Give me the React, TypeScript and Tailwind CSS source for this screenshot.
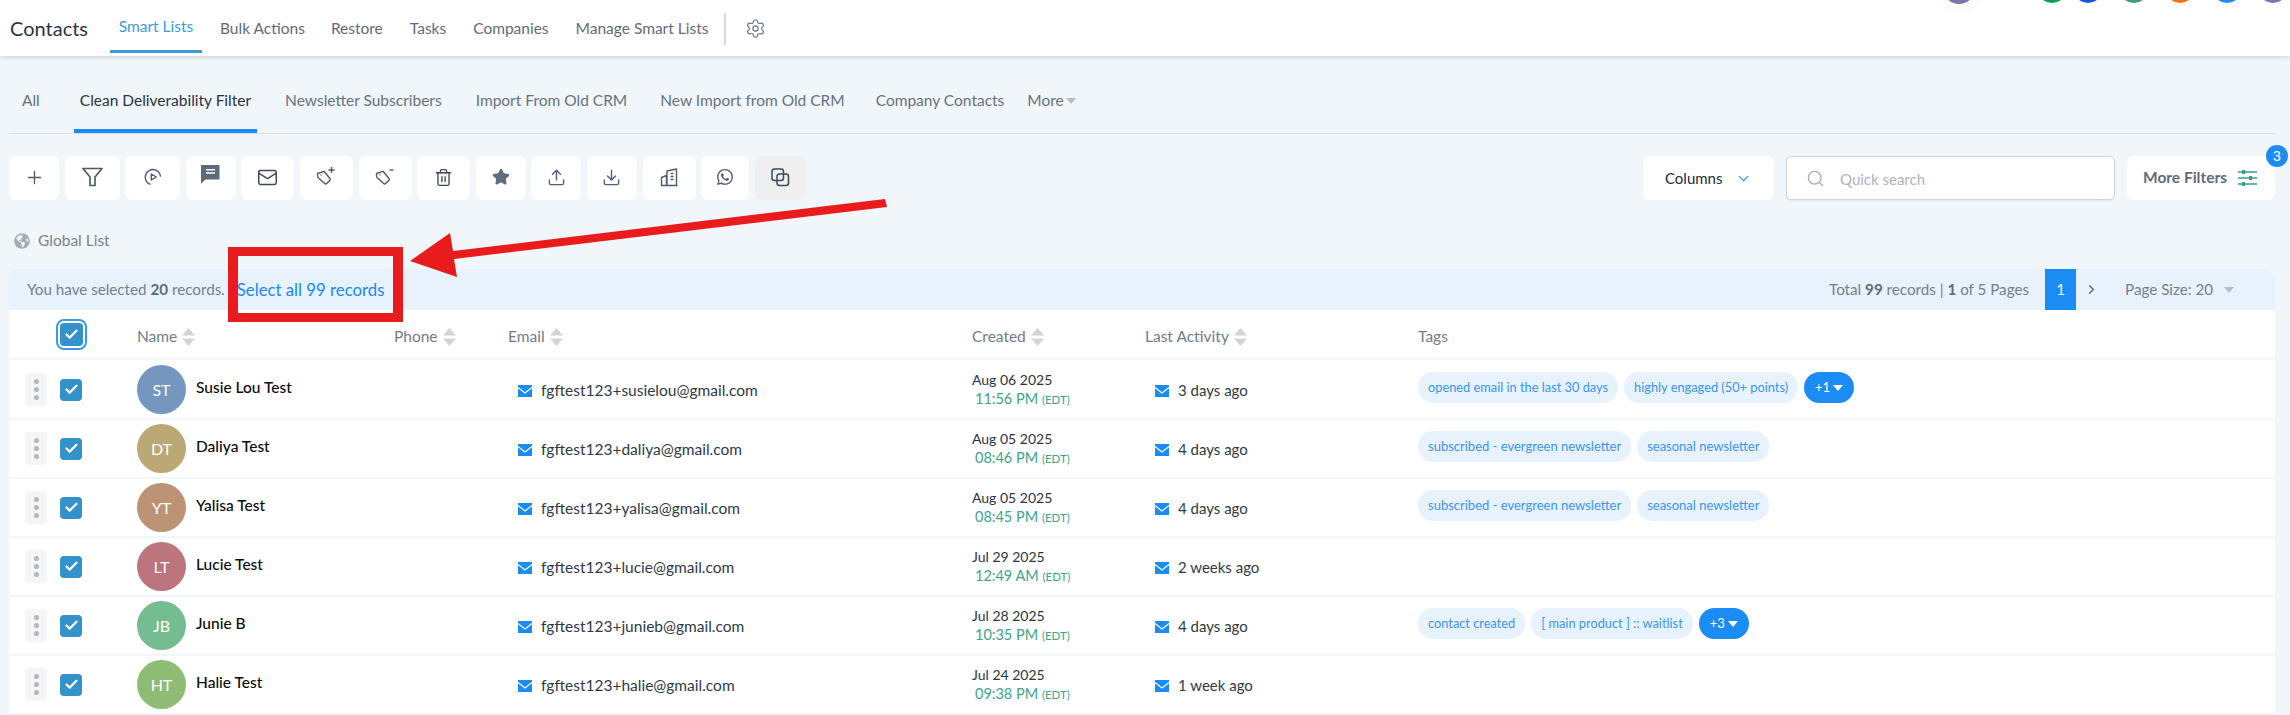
import { Plus, Mail, Trash2, Star, Upload, Download, Settings, Search, Check, ChevronDown, ChevronRight } from "lucide-react";
import { BsWhatsapp } from "react-icons/bs";
import { FaGlobeAmericas } from "react-icons/fa";

const ICON = "#4d5c6b";

function FilterIcon() {
  return (
    <svg width="21" height="20" viewBox="0 0 21 20" fill="none" stroke={ICON} strokeWidth="1.7" strokeLinejoin="round">
      <path d="M1 1.5h19l-7 8.5v8.5h-5V10z" />
    </svg>
  );
}

function PlayIcon() {
  return (
    <svg width="18" height="18" viewBox="0 0 18 18" fill="none" stroke={ICON} strokeWidth="1.4" strokeLinecap="round" strokeLinejoin="round">
      <path d="M6 16.2A7.6 7.6 0 1 1 16.4 8" />
      <path d="M7.3 6v6l5-3z" />
    </svg>
  );
}

function ChatIcon() {
  return (
    <svg width="19" height="19" viewBox="0 0 19 19">
      <path d="M0 0h18.5v14.5H4.5L0 18.5z" fill="#5d6b78" />
      <path d="M5 4.8h9M5 8h9" stroke="#fff" strokeWidth="1.5" />
    </svg>
  );
}

function TagIcon({ sign }: { sign: "plus" | "minus" }) {
  return (
    <svg width="20" height="20" viewBox="0 0 20 20" fill="none" stroke={ICON} strokeWidth="1.4" strokeLinejoin="round">
      <path d="M1.5 6.5l6.5-2.2 6 7.2c.5.7.4 1.4-.2 1.9l-3.2 3.2c-.6.6-1.4.5-1.9-.1L2 10.5c-.5-.6-.6-1.3-.5-4z" />
      <circle cx="5" cy="8" r=".7" fill={ICON} stroke="none" />
      {sign === "plus" ? <path d="M15.5 0v6M12.5 3h6" /> : <path d="M14.5 3h4" />}
    </svg>
  );
}

function BuildingIcon() {
  return (
    <svg width="19" height="19" viewBox="0 0 19 19" fill="none" stroke={ICON} strokeWidth="1.4" strokeLinejoin="round">
      <path d="M1 17.5h16.5M1.5 17.5v-8l5-2v10M7 17.5V3l9.5-2v16.5" />
      <path d="M10.5 5.5h3M10.5 8.5h3M10.5 11.5h3" />
    </svg>
  );
}

function CopyIcon() {
  return (
    <svg width="19" height="19" viewBox="0 0 19 19" fill="none" stroke="#3c4a58" strokeWidth="1.5">
      <rect x="1" y="1" width="11.5" height="11.5" rx="2.5" />
      <rect x="6" y="6" width="11.5" height="11.5" rx="2.5" />
    </svg>
  );
}

function SlidersIcon() {
  return (
    <svg width="19" height="18" viewBox="0 0 19 18" fill="none" stroke="#37a085" strokeWidth="1.6">
      <path d="M0 3h19M0 9h19M0 15h19" />
      <path d="M5.5 1v4M12.5 7v4M5.5 13v4" strokeWidth="3" />
    </svg>
  );
}

function MailBadge() {
  return (
    <svg width="14" height="12" viewBox="0 0 14 12" className="shrink-0">
      <rect width="14" height="12" fill="#1c8cf5" />
      <path d="M0 2.5l7 5.5 7-5.5" fill="none" stroke="#fff" strokeWidth="1.1" />
    </svg>
  );
}

function SortIcon() {
  return (
    <svg width="13" height="18" viewBox="0 0 13 18" className="ml-[5px]" fill="#d3d3d3">
      <path d="M6.5 0L13 7.5H0zM6.5 18L0 10.5h13z" />
    </svg>
  );
}

function Caret({ className }: { className: string }) {
  return <span className={`inline-block h-0 w-0 border-x-[5px] border-t-[6px] border-x-transparent ${className}`} />;
}

const toolbar = [
  { w: "w-[50px]", icon: <Plus size={21} color={ICON} strokeWidth={1.5} /> },
  { w: "w-[55px]", icon: <FilterIcon /> },
  { w: "w-[55px]", icon: <PlayIcon /> },
  { w: "w-[50px]", icon: <ChatIcon />, up: true },
  { w: "w-[53px]", icon: <Mail size={21} color="#3c4a58" strokeWidth={1.7} /> },
  { w: "w-[53px]", icon: <TagIcon sign="plus" /> },
  { w: "w-[53px]", icon: <TagIcon sign="minus" /> },
  { w: "w-[53px]", icon: <Trash2 size={19} color="#3c4a58" strokeWidth={1.7} /> },
  { w: "w-[50px]", icon: <Star size={18} color="#5d6e7e" fill="#5d6e7e" /> },
  { w: "w-[50px]", icon: <Upload size={19} color="#506478" strokeWidth={1.8} /> },
  { w: "w-[50px]", icon: <Download size={19} color="#506478" strokeWidth={1.8} /> },
  { w: "w-[53px]", icon: <BuildingIcon /> },
  { w: "w-[48px]", icon: <BsWhatsapp size={16} color={ICON} /> },
  { w: "w-[51px]", icon: <CopyIcon />, active: true },
];

const rows = [
  { initials: "ST", color: "bg-[#7596bf]", name: "Susie Lou Test", email: "fgftest123+susielou@gmail.com", date: "Aug 06 2025", time: "11:56 PM", activity: "3 days ago", tags: ["opened email in the last 30 days", "highly engaged (50+ points)"], tagSize: "text-[12.8px]", more: "+1" },
  { initials: "DT", color: "bg-[#bca875]", name: "Daliya Test", email: "fgftest123+daliya@gmail.com", date: "Aug 05 2025", time: "08:46 PM", activity: "4 days ago", tags: ["subscribed - evergreen newsletter", "seasonal newsletter"], tagSize: "text-[13px]" },
  { initials: "YT", color: "bg-[#bc9475]", name: "Yalisa Test", email: "fgftest123+yalisa@gmail.com", date: "Aug 05 2025", time: "08:45 PM", activity: "4 days ago", tags: ["subscribed - evergreen newsletter", "seasonal newsletter"], tagSize: "text-[13px]" },
  { initials: "LT", color: "bg-[#bc757c]", name: "Lucie Test", email: "fgftest123+lucie@gmail.com", date: "Jul 29 2025", time: "12:49 AM", activity: "2 weeks ago", tags: [], tagSize: "" },
  { initials: "JB", color: "bg-[#75bc90]", name: "Junie B", email: "fgftest123+junieb@gmail.com", date: "Jul 28 2025", time: "10:35 PM", activity: "4 days ago", tags: ["contact created", "[ main product ] :: waitlist"], tagSize: "text-[12.8px]", more: "+3" },
  { initials: "HT", color: "bg-[#8fbc75]", name: "Halie Test", email: "fgftest123+halie@gmail.com", date: "Jul 24 2025", time: "09:38 PM", activity: "1 week ago", tags: [], tagSize: "" },
];

const columns = "grid grid-cols-[128px_257px_114px_464px_173px_273px_1fr] items-center";

export default function App() {
  return (
    <div className="relative h-[715px] w-[2290px] overflow-hidden bg-[#f1f6fa] font-[Lato,sans-serif]">
      {/* Top nav */}
      <header className="relative flex h-14 items-center bg-white pl-[10px] shadow-[0_1px_5px_rgba(90,100,120,0.25)]">
        <span className="w-[100px] text-[20px] text-[#2a3442]">Contacts</span>
        <nav className="flex h-full items-center pt-[1px] text-[15.5px] text-[#5f6b78]">
          <a className="flex h-[52px] w-[92px] items-center justify-center self-start border-b-[3px] border-[#3b9bdc] pt-[3px] text-[#3b9bdc]">Smart Lists</a>
          <a className="ml-[18px]">Bulk Actions</a>
          <a className="ml-[26px]">Restore</a>
          <a className="ml-[27px]">Tasks</a>
          <a className="ml-[27px]">Companies</a>
          <a className="ml-[27px]">Manage Smart Lists</a>
          <span className="ml-[16px] h-[32px] w-[2px] bg-[#d6d9dd]" />
          <Settings size={21} strokeWidth={1.3} color="#68747f" className="ml-[19px]" />
        </nav>
        <div className="ml-auto -mt-[81px] mr-[2px] flex items-center">
          <span className="size-[32px] rounded-full bg-[#7e73ae] shadow-[0_0_0_10px_rgba(0,0,0,0.012)]" />
          <span className="ml-[62px] size-[30px] rounded-full bg-[#0f9d58]" />
          <span className="ml-[6px] size-[30px] rounded-full bg-[#1a56db]" />
          <span className="ml-[16px] size-[30px] rounded-full bg-[#3c9a83]" />
          <span className="ml-[16px] size-[30px] rounded-full bg-[#f97316]" />
          <span className="ml-[17px] size-[30px] rounded-full bg-[#1c8cf5]" />
          <span className="ml-[16px] size-[30px] rounded-full bg-[#7e73ae]" />
        </div>
      </header>

      <div className="ml-[9px] mr-[15px]">
        {/* Smart list tabs */}
        <div className="flex h-[78px] items-center border-b border-[#d9dfe5] pt-[12px] text-[15.5px] text-[#66727f]">
          <a className="ml-[13px]">All</a>
          <a className="relative ml-[40px] flex h-full items-center text-[#2a3442]">
            Clean Deliverability Filter
            <span className="absolute -inset-x-[6px] bottom-0 h-[4px] bg-[#1c8cf5]" />
          </a>
          <a className="ml-[34px]">Newsletter Subscribers</a>
          <a className="ml-[34px]">Import From Old CRM</a>
          <a className="ml-[33px]">New Import from Old CRM</a>
          <a className="ml-[31px]">Company Contacts</a>
          <a className="ml-[23px] flex items-center">
            More
            <Caret className="ml-[2px] border-t-[#b5bcc3]" />
          </a>
        </div>

        {/* Actions */}
        <div className="mt-[22px] flex h-[44px] items-stretch">
          <div className="flex gap-[5.6px]">
            {toolbar.map((t, i) => (
              <button
                key={i}
                className={`flex items-center justify-center rounded-[7px] ${t.w} ${t.active ? "bg-[#efefef]" : "bg-white"} ${t.up ? "pb-[7px]" : "pb-[2px]"}`}
              >
                {t.icon}
              </button>
            ))}
          </div>
          <div className="ml-auto flex gap-[12px]">
            <button className="flex w-[131px] items-center rounded-[7px] bg-white pl-[22px] text-[15px] text-[#1f2a3a]">
              Columns
              <ChevronDown size={17} color="#1c8cf5" strokeWidth={1.6} className="ml-[13px]" />
            </button>
            <div className="flex w-[329px] items-center rounded-[5px] border border-[#cfd5dd] bg-white pl-[19px] text-[15px] text-[#aeb4bb] shadow-[0_1px_2px_rgba(0,0,0,0.08)]">
              <Search size={19} color="#a9afb6" strokeWidth={1.7} />
              <span className="ml-[15px] pt-[2px]">Quick search</span>
            </div>
            <button className="relative flex w-[148px] items-center rounded-[7px] bg-white pl-[16px] text-[15.5px] font-bold text-[#5f6b78]">
              More Filters
              <span className="ml-[11px]"><SlidersIcon /></span>
              <span className="absolute -right-[13px] -top-[11px] flex size-[22px] items-center justify-center rounded-full bg-[#1c8cf5] font-[Liberation_Sans,sans-serif] text-[14px] font-normal text-white">3</span>
            </button>
          </div>
        </div>

        {/* Global list label */}
        <div className="flex h-[69px] items-center pl-[5px] pt-[13px] text-[15.5px] text-[#78838d]">
          <FaGlobeAmericas size={16} color="#a4adb5" />
          <span className="ml-[8px]">Global List</span>
        </div>

        {/* Selection + pagination */}
        <div className="flex h-[41px] items-center rounded-t-[9px] bg-[#e7f2fd] pl-[18px] text-[15.2px] text-[#74808c]">
          <span>You have selected <b className="text-[#5f6b78]">20</b> records.</span>
          <a className="ml-[12px] text-[16.75px] text-[#2088f0]">Select all 99 records</a>
          <span className="ml-auto">Total <b className="text-[#5f6b78]">99</b> records | <b className="text-[#5f6b78]">1</b> of 5 Pages</span>
          <span className="ml-[16px] flex h-full w-[31px] items-center justify-center bg-[#1c8cf5] text-white">1</span>
          <ChevronRight size={15} color="#5f6b78" strokeWidth={2.4} className="ml-[8px]" />
          <span className="ml-[26px]">Page Size: 20</span>
          <Caret className="ml-[11px] mr-[41px] border-t-[#b5bcc3]" />
        </div>

        {/* Table */}
        <div className="bg-white">
          <div className={`${columns} h-[50px] border-b-2 border-[#f1f6fa] text-[15.5px] text-[#717c87]`}>
            <div className="pl-[47px]">
              <span className="flex size-[31px] items-center justify-center rounded-[8px] border-2 border-[#3b9bdc]">
                <span className="flex size-[23px] items-center justify-center rounded-[4px] bg-[#3292c9]">
                  <Check size={15} color="#fff" strokeWidth={3.5} />
                </span>
              </span>
            </div>
            <div className="mt-[6px] flex items-center">Name<SortIcon /></div>
            <div className="mt-[6px] flex items-center">Phone<SortIcon /></div>
            <div className="mt-[6px] flex items-center">Email<SortIcon /></div>
            <div className="mt-[6px] flex items-center">Created<SortIcon /></div>
            <div className="mt-[6px] flex items-center">Last Activity<SortIcon /></div>
            <div className="mt-[6px]">Tags</div>
          </div>

          {rows.map((r, i) => (
            <div key={r.email} className={`${columns} border-b-2 border-[#f1f6fa] ${i === 0 ? "h-[60px] pt-px" : "h-[59px]"}`}>
              <div className="flex items-center pl-4">
                <span className="flex h-[33px] w-[22px] flex-col items-center justify-center gap-[3px] rounded-[4px] bg-[#f5f5f5]">
                  <span className="size-[5px] rounded-full bg-[#b1b8be]" />
                  <span className="size-[5px] rounded-full bg-[#b1b8be]" />
                  <span className="size-[5px] rounded-full bg-[#b1b8be]" />
                </span>
                <span className="ml-[13px] flex size-[22px] items-center justify-center rounded-[4px] bg-[#3292c9]">
                  <Check size={15} color="#fff" strokeWidth={3.5} />
                </span>
              </div>
              <div className="flex items-center">
                <span className={`flex size-[49px] items-center justify-center rounded-full text-[16px] text-white ${r.color}`}>{r.initials}</span>
                <span className="ml-[10px] -mt-[3px] text-[15.5px] font-medium text-[#0b0b0b]">{r.name}</span>
              </div>
              <div />
              <div className="mt-[2px] flex items-center pl-[10px] text-[15.5px] text-[#2f3a45]">
                <MailBadge />
                <span className="ml-[9px]">{r.email}</span>
              </div>
              <div className="-mt-[1px] leading-[19px]">
                <div className="text-[14px] text-[#2a3442]">{r.date}</div>
                <div className="pl-[3px] text-[14.5px] text-[#3fa38b]">
                  {r.time} <span className="text-[11.5px]">(EDT)</span>
                </div>
              </div>
              <div className="mt-[2px] flex items-center pl-[10px] text-[15px] text-[#2f3a45]">
                <MailBadge />
                <span className="ml-[9px]">{r.activity}</span>
              </div>
              <div className="-mt-[4px] flex items-center gap-[6px]">
                {r.tags.map((t) => (
                  <span key={t} className={`flex h-[31px] items-center rounded-[15px] bg-[#e7f2fd] px-[10px] text-[#3b94ee] ${r.tagSize}`}>{t}</span>
                ))}
                {r.more && (
                  <span className="flex h-[31px] w-[50px] items-center justify-center rounded-[16px] bg-[#1c8cf5] text-[13px] text-white">
                    {r.more}
                    <Caret className="ml-[3px] border-x-[4px] border-t-[5px] border-t-white" />
                  </span>
                )}
              </div>
            </div>
          ))}
        </div>
      </div>

      {/* Red annotation drawn on top of the screenshot */}
      <div className="absolute left-[228px] top-[247px] h-[75px] w-[175px] border-x-[10px] border-y-[9px] border-[#e81c1c]" />
      <svg className="absolute left-0 top-0" width="2290" height="715" fill="#e81c1c">
        <polygon points="410,261 450,233 453,251 885,199 887,207 454,259 457,277" />
      </svg>
    </div>
  );
}
